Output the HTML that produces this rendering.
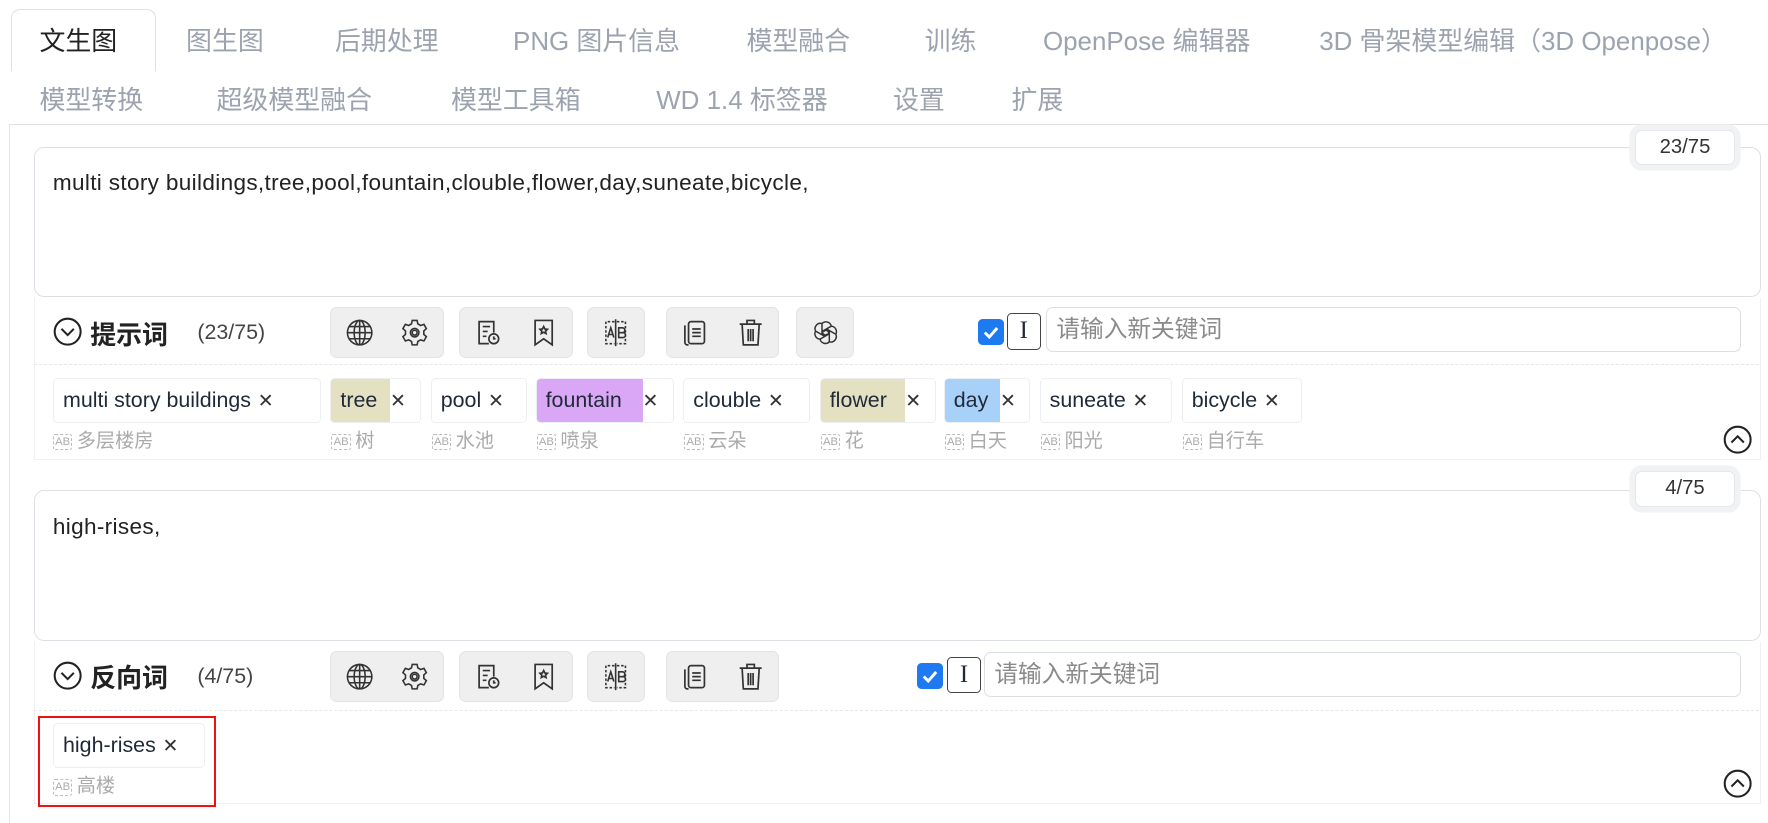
<!DOCTYPE html>
<html><head><meta charset="utf-8"><style>
html,body{margin:0;padding:0;background:#fff;overflow:hidden;width:1768px;height:823px}
#w{position:relative;width:1568px;height:730px;zoom:1.12755;font-family:"Liberation Sans","Noto Sans CJK SC",sans-serif;color:#1f2937}
.a{position:absolute}
.tab{position:absolute;font-size:23px;color:#9ca3af;white-space:nowrap}
.ta{position:absolute;left:30px;width:1530px;border:1px solid #dcdfe4;border-radius:9px;background:#fff}
.ta span{position:absolute;left:16px;font-size:20px;color:#222;letter-spacing:0.3px}
.cnt{position:absolute;left:1450px;width:87px;height:30px;border:1px solid #e5e7eb;border-radius:6px;background:#fff;box-shadow:0 0 0 5px #f1f2f4;font-size:18px;text-align:center;line-height:30px;color:#333}
.grp{position:absolute;height:44px;background:#efefef;border:1px solid #e3e3e3;border-radius:6px;display:flex;align-items:center;justify-content:space-around}
.grp svg{width:26px;height:26px}
.lbl{position:absolute;font-size:23px;font-weight:bold;color:#222}
.sub{position:absolute;font-size:19px;color:#444}
.inp{position:absolute;height:40px;border:1px solid #dcdfe4;border-radius:6px;background:#fff;font-size:21px;color:#8a8a8a;line-height:40px;padding-left:8px;box-sizing:border-box}
.chk{position:absolute;width:23px;height:23px;background:#1e7af0;border-radius:4px}
.ib{position:absolute;width:30px;height:32px;border:1.5px solid #444;border-radius:4px;box-sizing:border-box;text-align:center;font-size:22px;line-height:30px;font-family:"Liberation Serif",serif}
.tag{position:absolute;height:38px;border:1px solid #eceef1;border-radius:4px;background:#fff;font-size:19px;line-height:38px;white-space:nowrap;overflow:hidden}
.tag b{font-weight:normal;display:inline-block;padding:0 6px 0 8px;height:38px}
.tag i{font-style:normal;color:#333;padding-right:6px;font-size:17px}
.tr{position:absolute;font-size:17px;color:#aaa;white-space:nowrap}
.tr small{display:inline-block;font-size:10px;border:1px dashed #bbb;border-radius:2px;padding:0 1px;margin-right:4px;vertical-align:2px;line-height:13px}
.sep{position:absolute;left:30px;width:1530px;border-top:1px dashed #e5e7eb}
</style></head><body><div id="w">
<div class="a" style="left:8px;top:110px;width:1px;height:620px;background:#e5e7eb"></div>
<div class="a" style="left:8px;top:110px;width:1560px;height:1px;background:#e0e0e0"></div>
<div class="a" style="left:10px;top:8px;width:127px;height:54px;border:1px solid #e0e0e0;border-bottom:none;border-radius:8px 8px 0 0;background:#fff"></div>
<div class="tab" style="left:35px;top:19px;color:#222">文生图</div>
<div class="tab" style="left:165px;top:19px">图生图</div>
<div class="tab" style="left:297px;top:19px">后期处理</div>
<div class="tab" style="left:455px;top:19px">PNG 图片信息</div>
<div class="tab" style="left:662px;top:19px">模型融合</div>
<div class="tab" style="left:820px;top:19px">训练</div>
<div class="tab" style="left:925px;top:19px">OpenPose 编辑器</div>
<div class="tab" style="left:1170px;top:19px">3D 骨架模型编辑（3D Openpose）</div>
<div class="tab" style="left:35px;top:71px">模型转换</div>
<div class="tab" style="left:192px;top:71px">超级模型融合</div>
<div class="tab" style="left:400px;top:71px">模型工具箱</div>
<div class="tab" style="left:582px;top:71px">WD 1.4 标签器</div>
<div class="tab" style="left:792px;top:71px">设置</div>
<div class="tab" style="left:897px;top:71px">扩展</div>

<svg width="0" height="0" style="position:absolute"><defs>
<symbol id="dn" viewBox="0 0 26 26"><g fill="none" stroke="#222" stroke-width="1.8"><circle cx="13" cy="13" r="11.5"/><path d="M7.5 10.5l5.5 5.5 5.5-5.5"/></g></symbol>
<symbol id="up" viewBox="0 0 26 26"><g fill="none" stroke="#222" stroke-width="1.8"><circle cx="13" cy="13" r="11.5"/><path d="M7.5 15.5l5.5-5.5 5.5 5.5"/></g></symbol>
<symbol id="ck" viewBox="0 0 23 23"><path d="M6 12l4 4 7-8" fill="none" stroke="#fff" stroke-width="2.6"/></symbol>
<symbol id="globe" viewBox="0 0 24 24"><g fill="none" stroke="#333" stroke-width="1.3"><circle cx="12" cy="12" r="10"/><ellipse cx="12" cy="12" rx="4.5" ry="10"/><path d="M2 12h20M3.5 7h17M3.5 17h17M12 2v20"/></g></symbol>
<symbol id="gear" viewBox="0 0 24 24"><g fill="none" stroke="#333" stroke-width="1.3"><path d="M10 2h4l.6 2.8 2.3 1.3 2.7-.9 2 3.5-2.1 1.9v2.8l2.1 1.9-2 3.5-2.7-.9-2.3 1.3L14 22h-4l-.6-2.8-2.3-1.3-2.7.9-2-3.5 2.1-1.9v-2.8L2.4 8.7l2-3.5 2.7.9 2.3-1.3z"/><circle cx="12" cy="12" r="3.5"/><circle cx="12" cy="12" r="2"/></g></symbol>
<symbol id="doc" viewBox="0 0 24 24"><g fill="none" stroke="#333" stroke-width="1.4"><path d="M13 21H5V3h12v9"/><path d="M8 7h6M8 11h4M8 15h3"/><circle cx="17" cy="17" r="4"/><path d="M17 15v2h1.5"/></g></symbol>
<symbol id="bm" viewBox="0 0 24 24"><g fill="none" stroke="#333" stroke-width="1.4"><path d="M5 2h14v20l-7-5-7 5z"/><path d="M12 7l1 2 2 .3-1.5 1.4.4 2-1.9-1-1.9 1 .4-2L9 9.3l2-.3z"/></g></symbol>
<symbol id="ab" viewBox="0 0 24 24"><g fill="none" stroke="#333" stroke-width="1.3"><path d="M11 3H4v18h7M13 3h7v18h-7" stroke-dasharray="2 1.5"/><path d="M12 1v22"/><path d="M5.5 16l2.5-8 2.5 8M6.3 13.5h3.4M14.5 8h3a2 2 0 010 4h-3zM14.5 12h3.5a2 2 0 010 4h-3.5z"/></g></symbol>
<symbol id="copy" viewBox="0 0 24 24"><g fill="none" stroke="#333" stroke-width="1.4"><rect x="7" y="3" width="13" height="18" rx="2"/><path d="M4 6v14a2 2 0 002 2h1M10 9h7M10 12h7M10 15h7"/></g></symbol>
<symbol id="trash" viewBox="0 0 24 24"><g fill="none" stroke="#333" stroke-width="1.4"><path d="M3 5h18M9 5V2h6v3M5 5l1 17h12l1-17M10 9v10M12 9v10M14 9v10"/></g></symbol>
<symbol id="oai" viewBox="0 0 24 24"><g fill="none" stroke="#333" stroke-width="1.2"><path d="M9 4.5a4.5 4.5 0 017.6 2.2M16.6 6.7a4.5 4.5 0 013.7 6.6M20.3 13.3a4.5 4.5 0 01-5.3 6.2M15 19.5a4.5 4.5 0 01-7.6-2.2M7.4 17.3a4.5 4.5 0 01-3.7-6.6M3.7 10.7A4.5 4.5 0 019 4.5"/><path d="M9 4.5v8l3 1.7M16.6 6.7l-7 4 .1 3.4M20.3 13.3l-7-4-3 1.7M15 19.5v-8l-3-1.7M7.4 17.3l7-4-.1-3.4M3.7 10.7l7 4 3-1.7"/></g></symbol>
</defs></svg>

<!-- prompt 1 -->
<div class="ta" style="top:130px;height:132px"><span style="top:20px">multi story buildings,tree,pool,fountain,clouble,flower,day,suneate,bicycle,</span></div>
<div class="cnt" style="top:115px">23/75</div>
<div class="a" style="left:30px;top:264px;width:1530px;height:143px;border:1px solid #eef0f2;border-top:none"></div>
<svg class="a" style="left:47px;top:281px" width="26" height="26"><use href="#dn"/></svg>
<div class="lbl" style="left:80px;top:279px">提示词</div>
<div class="sub" style="left:175px;top:284px">(23/75)</div>
<div class="sep" style="top:323px"></div>

<!-- negative -->
<div class="ta" style="top:435px;height:132px"><span style="top:20px">high-rises,</span></div>
<div class="cnt" style="top:418px">4/75</div>
<div class="a" style="left:30px;top:569px;width:1530px;height:143px;border:1px solid #eef0f2;border-top:none"></div>
<svg class="a" style="left:47px;top:586px" width="26" height="26"><use href="#dn"/></svg>
<div class="lbl" style="left:80px;top:584px">反向词</div>
<div class="sub" style="left:175px;top:589px">(4/75)</div>
<div class="sep" style="top:630px"></div>

<!-- toolbars -->
<div class="grp" style="left:293px;top:272px;width:99px"><svg><use href="#globe"/></svg><svg><use href="#gear"/></svg></div>
<div class="grp" style="left:407px;top:272px;width:99px"><svg><use href="#doc"/></svg><svg><use href="#bm"/></svg></div>
<div class="grp" style="left:521px;top:272px;width:49px"><svg><use href="#ab"/></svg></div>
<div class="grp" style="left:591px;top:272px;width:98px"><svg><use href="#copy"/></svg><svg><use href="#trash"/></svg></div>
<div class="grp" style="left:706px;top:272px;width:50px"><svg><use href="#oai"/></svg></div>
<svg class="chk" style="left:867px;top:283px" width="23" height="23"><use href="#ck"/></svg><div class="ib" style="left:893px;top:278px">I</div>
<div class="inp" style="left:928px;top:272px;width:616px">请输入新关键词</div>

<div class="grp" style="left:293px;top:577px;width:99px"><svg><use href="#globe"/></svg><svg><use href="#gear"/></svg></div>
<div class="grp" style="left:407px;top:577px;width:99px"><svg><use href="#doc"/></svg><svg><use href="#bm"/></svg></div>
<div class="grp" style="left:521px;top:577px;width:49px"><svg><use href="#ab"/></svg></div>
<div class="grp" style="left:591px;top:577px;width:98px"><svg><use href="#copy"/></svg><svg><use href="#trash"/></svg></div>
<svg class="chk" style="left:813px;top:588px" width="23" height="23"><use href="#ck"/></svg><div class="ib" style="left:840px;top:583px">I</div>
<div class="inp" style="left:873px;top:578px;width:671px">请输入新关键词</div>

<!-- tags -->
<div class="tag" style="left:47px;top:335px;width:236px"><b>multi story buildings</b><i>✕</i></div>
<div class="tag" style="left:293px;top:335px;width:79px"><b style="background:#e4e1c3;width:38px">tree</b><i>✕</i></div>
<div class="tag" style="left:382px;top:335px;width:84px"><b>pool</b><i>✕</i></div>
<div class="tag" style="left:475px;top:335px;width:121px"><b style="background:#d9a7f6;width:80px">fountain</b><i>✕</i></div>
<div class="tag" style="left:606px;top:335px;width:111px"><b>clouble</b><i>✕</i></div>
<div class="tag" style="left:727px;top:335px;width:101px"><b style="background:#e4e1c3;width:61px">flower</b><i>✕</i></div>
<div class="tag" style="left:837px;top:335px;width:75px"><b style="background:#a8d1fa;width:35px">day</b><i>✕</i></div>
<div class="tag" style="left:922px;top:335px;width:116px"><b>suneate</b><i>✕</i></div>
<div class="tag" style="left:1048px;top:335px;width:105px"><b>bicycle</b><i>✕</i></div>
<div class="tr" style="left:47px;top:377px"><small>AB</small>多层楼房</div>
<div class="tr" style="left:294px;top:377px"><small>AB</small>树</div>
<div class="tr" style="left:383px;top:377px"><small>AB</small>水池</div>
<div class="tr" style="left:476px;top:377px"><small>AB</small>喷泉</div>
<div class="tr" style="left:607px;top:377px"><small>AB</small>云朵</div>
<div class="tr" style="left:728px;top:377px"><small>AB</small>花</div>
<div class="tr" style="left:838px;top:377px"><small>AB</small>白天</div>
<div class="tr" style="left:923px;top:377px"><small>AB</small>阳光</div>
<div class="tr" style="left:1049px;top:377px"><small>AB</small>自行车</div>
<svg class="a" style="left:1528px;top:377px" width="26" height="26"><use href="#up"/></svg>

<div class="tag" style="left:47px;top:641px;width:133px"><b>high-rises</b><i>✕</i></div>
<div class="tr" style="left:47px;top:683px"><small>AB</small>高楼</div>
<div class="a" style="left:34px;top:635px;width:154px;height:77px;border:2.5px solid #e11"></div>
<svg class="a" style="left:1528px;top:682px" width="26" height="26"><use href="#up"/></svg>
</div></body></html>
